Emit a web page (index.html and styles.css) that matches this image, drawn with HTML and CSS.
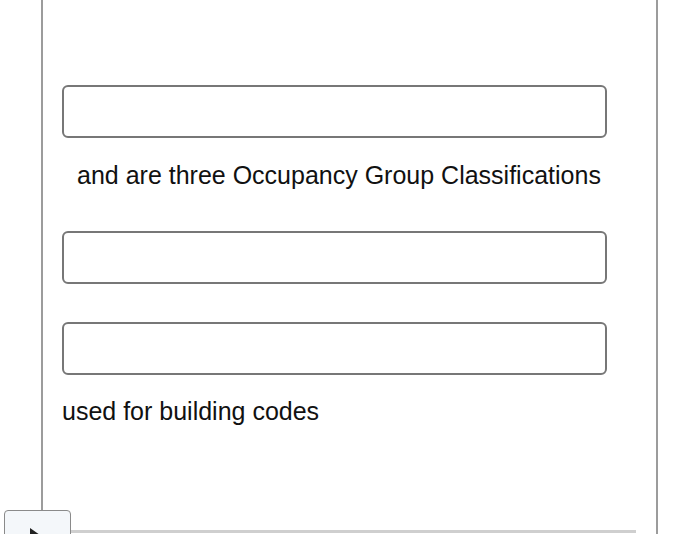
FILE: index.html
```html
<!DOCTYPE html>
<html>
<head>
<meta charset="utf-8">
<link rel="stylesheet" href="styles.css">
</head>
<body>
<div class="panel">
  <div class="content">
    <div class="field"></div>
    <p class="text indent">and are three Occupancy Group Classifications</p>
    <div class="field"></div>
    <div class="field gap"></div>
    <p class="text after">used for building codes</p>
  </div>
  <div class="bottom-bar"></div>
</div>
<button class="play-btn" type="button"><span class="tri"></span></button>
</body>
</html>
```
FILE: styles.css
```css
html, body {
  margin: 0;
  padding: 0;
  background: #ffffff;
  width: 700px;
  height: 534px;
  overflow: hidden;
  font-family: "Liberation Sans", Arial, sans-serif;
  color: #111;
}
.panel {
  margin-left: 41px;
  width: 617px;
  height: 534px;
  box-sizing: border-box;
  border-left: 2px solid #9c9c9c;
  border-right: 2px solid #9c9c9c;
  display: flex;
  flex-direction: column;
}
.content {
  padding: 85px 0 0 19px;
  flex: 1;
}
.field {
  width: 545px;
  height: 53px;
  box-sizing: border-box;
  border: 2px solid #777;
  border-radius: 6px;
}
.field.gap {
  margin-top: 38px;
}
.text {
  margin: 0;
  font-size: 25px;
  line-height: 28px;
}
.indent {
  padding-left: 15px;
  margin-top: 23px;
  margin-bottom: 42px;
}
.after {
  margin-top: 22px;
}
.bottom-bar {
  height: 3px;
  margin-right: 20px;
  margin-bottom: 1px;
  background: #cfcfcf;
}
.play-btn {
  position: absolute;
  left: 4px;
  top: 510px;
  width: 67px;
  height: 34px;
  padding: 0;
  box-sizing: border-box;
  border: 1.5px solid #8a8a8a;
  border-radius: 4px;
  background: #f4f7fa;
}
.tri {
  position: absolute;
  left: 25px;
  top: 17px;
  width: 0;
  height: 0;
  border-top: 7px solid transparent;
  border-bottom: 7px solid transparent;
  border-left: 10px solid #222;
}
```
